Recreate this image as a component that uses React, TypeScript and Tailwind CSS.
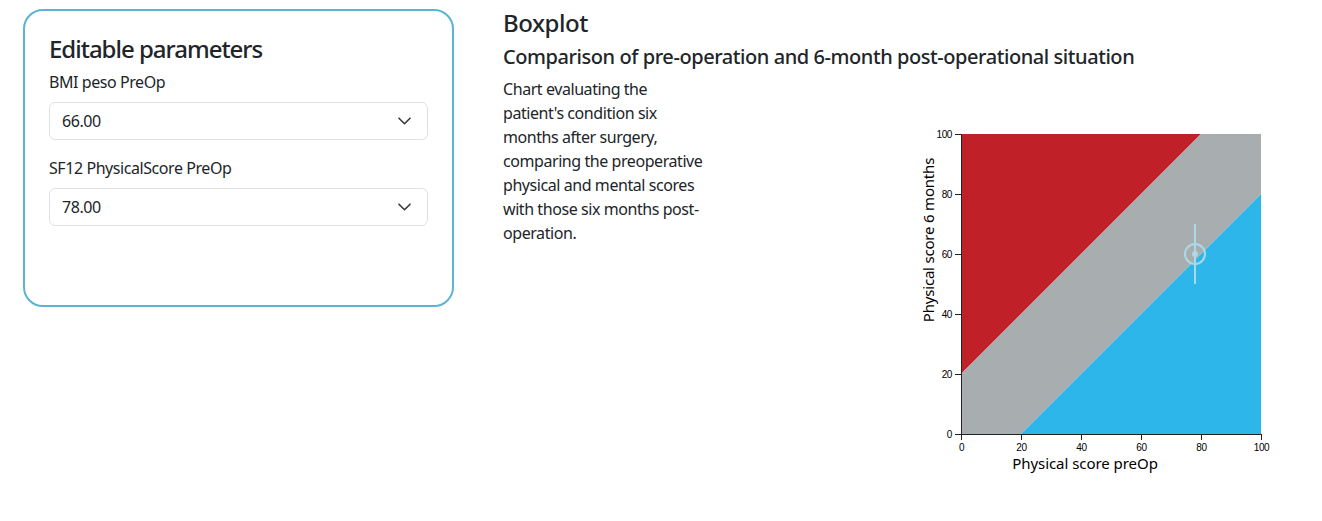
import React from "react";

const font = { fontFamily: '"Segoe UI", "Noto Sans", sans-serif' };

function Chevron() {
  return (
    <svg width="13" height="8" viewBox="0 0 13 8" className="shrink-0">
      <path d="M1 1.2l5.5 5.5 5.5-5.5" fill="none" stroke="#343a40" strokeWidth="1.6" strokeLinecap="round" strokeLinejoin="round" />
    </svg>
  );
}

function SelectBox({ value }: { value: string }) {
  return (
    <div className="flex h-[38px] w-full items-center justify-between rounded-[6px] border border-[#dee2e6] bg-white pl-[12px] pr-[16px] text-[16px] text-[#212529]">
      <span>{value}</span>
      <Chevron />
    </div>
  );
}

function Chart() {
  const x0 = 51;
  const y0 = 14;
  const s = 300;
  const sx = (v: number) => x0 + (v / 100) * s;
  const sy = (v: number) => y0 + s - (v / 100) * s;
  const ticks = [0, 20, 40, 60, 80, 100];
  return (
    <svg width="370" height="360" viewBox="0 0 370 360">
      <polygon points={`${sx(0)},${sy(20)} ${sx(0)},${sy(100)} ${sx(80)},${sy(100)}`} fill="#c02027" />
      <polygon points={`${sx(0)},${sy(0)} ${sx(0)},${sy(20)} ${sx(80)},${sy(100)} ${sx(100)},${sy(100)} ${sx(100)},${sy(80)} ${sx(20)},${sy(0)}`} fill="#a8aeaf" />
      <polygon points={`${sx(20)},${sy(0)} ${sx(100)},${sy(80)} ${sx(100)},${sy(0)}`} fill="#2db6e9" />
      {/* y axis */}
      <path d={`M${x0 - 6},${y0 + 0.5}H${x0 + 0.5}V${y0 + s + 0.5}H${x0 - 6}`} fill="none" stroke="#222" strokeWidth="1" />
      {ticks.map((t) => (
        <g key={`y${t}`}>
          <line x1={x0 - 6} x2={x0} y1={sy(t) + 0.5} y2={sy(t) + 0.5} stroke="#222" />
          <text x={x0 - 9} y={sy(t) + 3.5} textAnchor="end" fontSize="10" fill="#000" style={{ fontFamily: '"Liberation Sans", Arial, sans-serif' }}>
            {t}
          </text>
        </g>
      ))}
      {/* x axis */}
      <path d={`M${x0 + 0.5},${y0 + s + 6}V${y0 + s + 0.5}H${x0 + s + 0.5}V${y0 + s + 6}`} fill="none" stroke="#222" strokeWidth="1" />
      {ticks.map((t) => (
        <g key={`x${t}`}>
          <line x1={sx(t) + 0.5} x2={sx(t) + 0.5} y1={y0 + s} y2={y0 + s + 6} stroke="#222" />
          <text x={sx(t) + 0.5} y={y0 + s + 17} textAnchor="middle" fontSize="10" fill="#000" style={{ fontFamily: '"Liberation Sans", Arial, sans-serif' }}>
            {t}
          </text>
        </g>
      ))}
      {/* point */}
      <line x1={sx(78)} x2={sx(78)} y1={sy(70)} y2={sy(50)} stroke="#add8e6" strokeWidth="2" />
      <circle cx={sx(78)} cy={sy(60)} r="10" fill="none" stroke="#add8e6" strokeWidth="2" />
      <circle cx={sx(78)} cy={sy(60)} r="3" fill="#add8e6" />
      <text x="175" y="349" textAnchor="middle" fontSize="15" fill="#000" letterSpacing="-0.05" style={font}>
        Physical score preOp
      </text>
      <text transform="translate(24,120) rotate(-90)" textAnchor="middle" fontSize="15" fill="#000" letterSpacing="-0.2" style={font}>
        Physical score 6 months
      </text>
    </svg>
  );
}

export default function App() {
  return (
    <div className="flex min-h-[521px] w-full bg-white pl-[23px] pt-[9px] tracking-[-0.027em] text-[#212529]" style={font}>
      <div className="h-[298px] w-[431px] shrink-0 rounded-[20px] border-2 border-[#5ab4d4] px-[24px] pt-[24px]">
        <h3 className="mb-[6px] text-[24px] font-medium leading-[1.2] tracking-[-0.042em]">Editable parameters</h3>
        <div className="mb-[8px] text-[16px] leading-[24px]">BMI peso PreOp</div>
        <SelectBox value="66.00" />
        <div className="mb-[8px] mt-[16px] text-[16px] leading-[24px]">SF12 PhysicalScore PreOp</div>
        <SelectBox value="78.00" />
      </div>
      <div className="ml-[49px] flex flex-col">
        <h4 className="mb-[7px] text-[24px] font-medium leading-[1.2]">Boxplot</h4>
        <h5 className="mb-[8px] text-[20px] font-medium leading-[1.2]">Comparison of pre-operation and 6-month post-operational situation</h5>
        <div className="flex">
          <p className="w-[220px] shrink-0 text-[16px] leading-[24px]">
            Chart evaluating the<br />
            patient's condition six<br />
            months after surgery,<br />
            comparing the preoperative<br />
            physical and mental scores<br />
            with those six months post-<br />
            operation.
          </p>
          <div className="ml-[187px] mt-[43px]">
            <Chart />
          </div>
        </div>
      </div>
    </div>
  );
}
